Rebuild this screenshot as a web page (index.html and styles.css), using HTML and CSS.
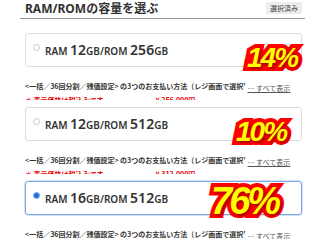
FILE: index.html
```html
<!DOCTYPE html>
<html lang="ja">
<head>
<meta charset="utf-8">
<link rel="stylesheet" href="styles.css">
</head>
<body>
<div class="page">
  <div class="head">
    <h2 class="title">RAM/ROMの容量を選ぶ</h2>
    <span class="done">選択済み</span>
  </div>
  <div class="list">
    <div class="option">
      <label class="card"><span class="radio"></span><span class="name">RAM <b>12</b>GB/ROM <b>256</b>GB</span></label>
      <div class="pay"><span class="pay-text">&lt;一括／36回分割／残価設定&gt; の3つのお支払い方法（レジ画面で選択'</span><a class="more">… すべて表示</a></div>
      <div class="note"><span>＊ 表示価格は税込みです</span><span class="price">¥ 256,000円</span></div>
      <span class="badge b14">14%</span>
    </div>
    <div class="option">
      <label class="card"><span class="radio"></span><span class="name">RAM <b>12</b>GB/ROM <b>512</b>GB</span></label>
      <div class="pay"><span class="pay-text">&lt;一括／36回分割／残価設定&gt; の3つのお支払い方法（レジ画面で選択'</span><a class="more">… すべて表示</a></div>
      <div class="note"><span>＊ 表示価格は税込みです</span><span class="price">¥ 312,000円</span></div>
      <span class="badge b10">10%</span>
    </div>
    <div class="option">
      <label class="card selected"><span class="radio on"></span><span class="name">RAM <b>16</b>GB/ROM <b>512</b>GB</span></label>
      <div class="pay"><span class="pay-text">&lt;一括／36回分割／残価設定&gt; の3つのお支払い方法（レジ画面で選択'</span><a class="more">… すべて表示</a></div>
      <span class="badge b76">76%</span>
    </div>
  </div>
</div>
</body>
</html>
```
FILE: styles.css
```css
body {
  margin: 0;
  background: #fff;
  font-family: "Noto Sans", "Noto Sans CJK JP", sans-serif;
  color: #333;
  overflow: hidden;
}
.page {
  width: 285px;
  margin-left: 20px;
}
.head {
  height: 18px;
  border-bottom: 1px solid #999;
  display: flex;
  justify-content: space-between;
  align-items: flex-start;
}
.title {
  margin: 1px 0 0 5px;
  font-size: 12px;
  font-weight: 700;
  line-height: 15px;
  color: #333;
}
.done {
  margin: 2px 3px 0 0;
  background: #ececec;
  font-size: 7px;
  padding: 1px 4px;
  line-height: 10px;
  color: #444;
  font-family: "Noto Sans CJK JP", sans-serif;
}
.list {
  padding-top: 14px;
}
.option {
  position: relative;
  margin: 0 3px 0 5px;
}
.card {
  height: 34px;
  border: 1px solid #dcdcdc;
  border-radius: 3px;
  box-sizing: border-box;
  display: flex;
  align-items: center;
  padding-left: 7px;
}
.card.selected {
  border-color: #7ba6e4;
  box-shadow: 0 0 0 0.5px #a9c6ef;
}
.radio {
  width: 7px;
  height: 7px;
  border-radius: 50%;
  border: 1px solid #c8c8c8;
  box-sizing: border-box;
  align-self: flex-start;
  margin-top: 10px;
  background: #fff;
}
.radio.on {
  background: #1f6fdc;
  border-color: #7fb0ee;
}
.name {
  margin-left: 5px;
  font-size: 10px;
  font-weight: 600;
  line-height: 14px;
  color: #333;
  white-space: nowrap;
}
.name b {
  font-size: 14px;
  font-weight: 600;
}
.pay {
  display: flex;
  margin-top: 14px;
  height: 10px;
  align-items: flex-start;
}
.pay-text {
  font-family: "Noto Sans CJK JP", sans-serif;
  font-size: 7px;
  font-weight: 700;
  white-space: nowrap;
  line-height: 10px;
  color: #333;
  flex: none;
}
.more {
  margin-left: 2px;
  margin-top: 3px;
  font-family: "Noto Sans CJK JP", sans-serif;
  font-size: 7px;
  color: #555;
  text-decoration: underline;
  line-height: 9px;
  white-space: nowrap;
}
.note {
  display: flex;
  height: 4px;
  overflow: hidden;
  margin-top: 5px;
  margin-bottom: 7px;
  color: #e60000;
  font-family: "Noto Sans CJK JP", sans-serif;
  font-size: 7px;
  font-weight: 700;
  line-height: 9px;
}
.price {
  margin-left: 52px;
}
.badge {
  position: absolute;
  font-family: "Liberation Sans", Arial, sans-serif;
  font-weight: 700;
  font-style: italic;
  line-height: 1;
  color: #ffff00;
  -webkit-text-stroke: 8px #ff0000;
  paint-order: stroke fill;
  text-shadow: 2px 2px 3px rgba(0, 0, 0, 0.35);
  letter-spacing: -2px;
}
.b14 {
  font-size: 28px;
  top: 11px;
  left: 222px;
}
.b10 {
  font-size: 28px;
  top: 11px;
  left: 211px;
}
.b76 {
  font-size: 38px;
  top: 1px;
  left: 186px;
  letter-spacing: -3px;
}
```
